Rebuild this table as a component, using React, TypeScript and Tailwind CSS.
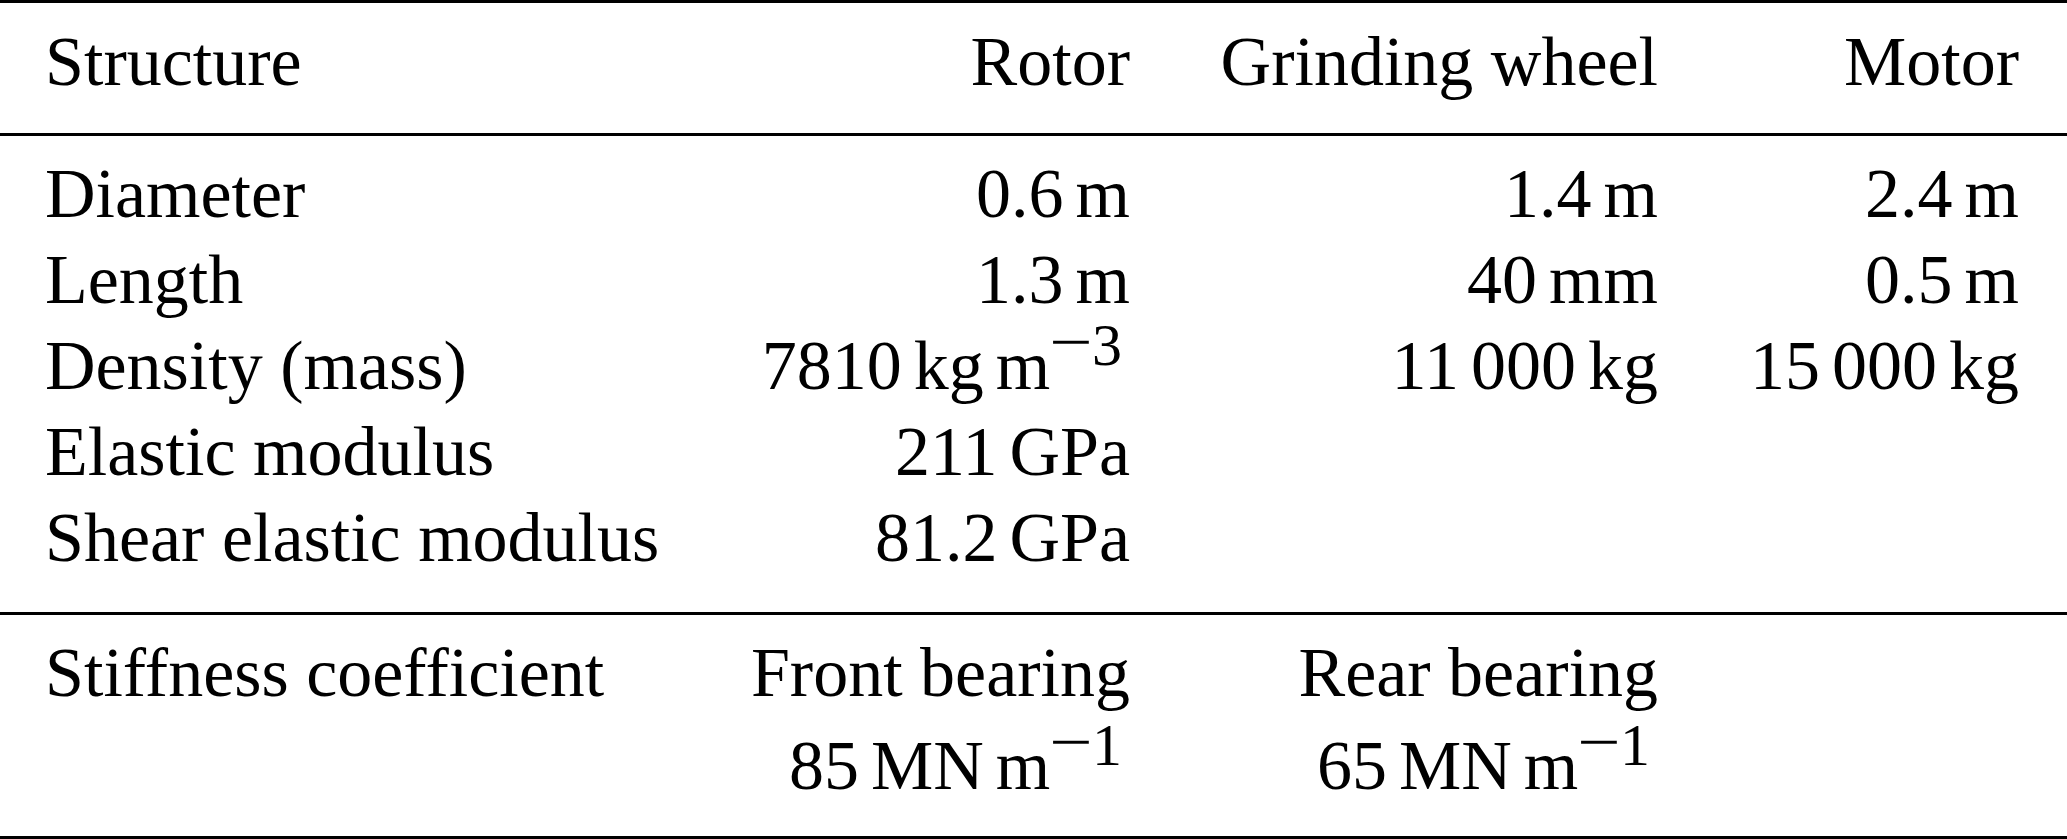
import React from "react";

const Th = () => <span className="inline-block w-[12px]" />;

const Sup = ({ children }: { children: React.ReactNode }) => (
  <>
    <span className="relative -top-[24px] text-[60px] leading-none">
      <span className="relative -top-[3px] inline-block mx-[4px] scale-x-[1.28]">−</span>
      {children}
    </span>
    <span className="inline-block w-[8px]" />
  </>
);

const Rule = () => <div className="h-[3px] w-full bg-black" />;

type Row = [React.ReactNode, React.ReactNode, React.ReactNode, React.ReactNode];

const rows: Row[] = [
  ["Diameter", <>0.6<Th />m</>, <>1.4<Th />m</>, <>2.4<Th />m</>],
  ["Length", <>1.3<Th />m</>, <>40<Th />mm</>, <>0.5<Th />m</>],
  [
    "Density (mass)",
    <>7810<Th />kg<Th />m<Sup>3</Sup></>,
    <>11<Th />000<Th />kg</>,
    <>15<Th />000<Th />kg</>,
  ],
  ["Elastic modulus", <>211<Th />GPa</>, "", ""],
  ["Shear elastic modulus", <>81.2<Th />GPa</>, "", ""],
];

const Grid = ({ children, className = "" }: { children: React.ReactNode; className?: string }) => (
  <div className={"grid grid-cols-[656px_474px_528px_361px_48px] " + className}>{children}</div>
);

const Line = ({ cells, h = "h-[86px] leading-[86px]" }: { cells: Row; h?: string }) => (
  <>
    <div className={"pl-[45px] whitespace-nowrap " + h}>{cells[0]}</div>
    <div className={"text-right whitespace-nowrap " + h}>{cells[1]}</div>
    <div className={"text-right whitespace-nowrap " + h}>{cells[2]}</div>
    <div className={"text-right whitespace-nowrap " + h}>{cells[3]}</div>
    <div className={h} />
  </>
);

export default function App() {
  return (
    <div className="w-[2067px] h-[839px] bg-white text-black font-['Liberation_Serif',serif] text-[70px] overflow-hidden">
      <Rule />
      <Grid className="pt-[16px] pb-[28px]">
        <Line cells={["Structure", "Rotor", "Grinding wheel", "Motor"]} />
      </Grid>
      <Rule />
      <Grid className="pt-[15px] pb-[31px]">
        {rows.map((r, i) => (
          <Line key={i} cells={r} />
        ))}
      </Grid>
      <Rule />
      <Grid className="pt-[15px] pb-[24px]">
        <Line cells={["Stiffness coefficient", "Front bearing", "Rear bearing", ""]} h="h-[93px] leading-[86px]" />
        <Line
          cells={[
            "",
            <>85<Th />MN<Th />m<Sup>1</Sup></>,
            <>65<Th />MN<Th />m<Sup>1</Sup></>,
            "",
          ]}
          h="h-[89px] leading-[86px]"
        />
      </Grid>
      <Rule />
    </div>
  );
}
